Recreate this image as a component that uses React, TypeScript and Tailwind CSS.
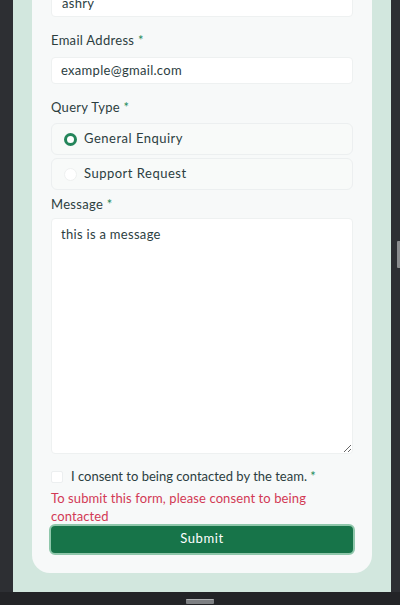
import React from "react";

const font = { fontFamily: 'Lato, "Noto Sans", sans-serif' };

function Label({ children }: { children: React.ReactNode }) {
  return (
    <div className="text-[13px] leading-[16px] text-[#2c3e3f] tracking-[0.3px]">
      {children} <span className="text-[#1d8a5b]">*</span>
    </div>
  );
}

export default function App() {
  return (
    <div className="relative w-[400px] h-[605px] bg-[#232427] flex flex-col overflow-hidden" style={font}>
      <div className="flex h-[592px]">
        <div className="w-[13px] bg-[#2d2f33]" />
        <div className="w-[378px] bg-[#d2e7de] pb-[19px] overflow-hidden">
          <div className="ml-[19px] w-[340px] h-[573px] bg-[#f7f9f9] rounded-b-[18px] px-[19px] flex flex-col">
            <div className="-mt-[10px] h-[27px] bg-white rounded-[4px] border border-[#eef1f1] px-[10px] flex items-center text-[13px] text-[#2c3e3f] tracking-[0.3px]">
              ashry
            </div>
            <div className="mt-[15px]">
              <Label>Email Address</Label>
            </div>
            <div className="mt-[9px] h-[27px] bg-white rounded-[4px] border border-[#eef1f1] px-[9px] flex items-center text-[13px] text-[#2c3e3f] tracking-[0.3px]">
              example@gmail.com
            </div>
            <div className="mt-[15px]">
              <Label>Query Type</Label>
            </div>
            <div className="mt-[8px] h-[32px] bg-[#f8faf9] rounded-[6px] border border-[#eceff0] flex items-center pl-[12px] gap-[7px]">
              <span className="w-[13px] h-[13px] rounded-full border-[3.5px] border-[#23855a] bg-white" />
              <span className="text-[13px] text-[#2c3e3f] tracking-[0.5px]">General Enquiry</span>
            </div>
            <div className="mt-[3px] h-[32px] bg-[#f8faf9] rounded-[6px] border border-[#eceff0] flex items-center pl-[12px] gap-[7px]">
              <span className="w-[13px] h-[13px] rounded-full border border-[#eef0f0] bg-white" />
              <span className="text-[13px] text-[#2c3e3f] tracking-[0.5px]">Support Request</span>
            </div>
            <div className="mt-[6px]">
              <Label>Message</Label>
            </div>
            <textarea
              readOnly
              value="this is a message"
              className="mt-[6px] h-[236px] bg-white rounded-[4px] border border-[#eef1f1] px-[9px] py-[6px] text-[13px] text-[#2c3e3f] tracking-[0.3px] outline-none"
              style={font}
            />
            <div className="mt-[13px] flex items-center gap-[8px]">
              <span className="w-[12px] h-[12px] bg-white border border-[#eceff0] rounded-[2px]" />
              <span className="text-[13px] text-[#2c3e3f] tracking-[0px]">
                I consent to being contacted by the team. <span className="text-[#1d8a5b]">*</span>
              </span>
            </div>
            <div className="mt-[2px] text-[13px] leading-[18px] text-[#d23a55] tracking-[0.1px]">
              To submit this form, please consent to being contacted
            </div>
            <button className="-mt-[1px] -mx-[2px] h-[31px] rounded-[6px] bg-[#177449] border-2 border-[#8fc7ab] text-white text-[13px] tracking-[0.6px]" style={font}>
              Submit
            </button>
          </div>
        </div>
        <div className="w-[9px] bg-[#2d2f33]" />
      </div>
      <div className="flex-1 flex justify-center pt-[7px]">
        <div className="w-[28px] h-[5px] rounded-[1px] bg-[#7d7f82] border-t border-[#b0b2b4]" />
      </div>
      <div className="absolute right-0 top-[241px] w-[3px] h-[27px] bg-[#8a8c8e] rounded-l-[1px]" />
    </div>
  );
}
